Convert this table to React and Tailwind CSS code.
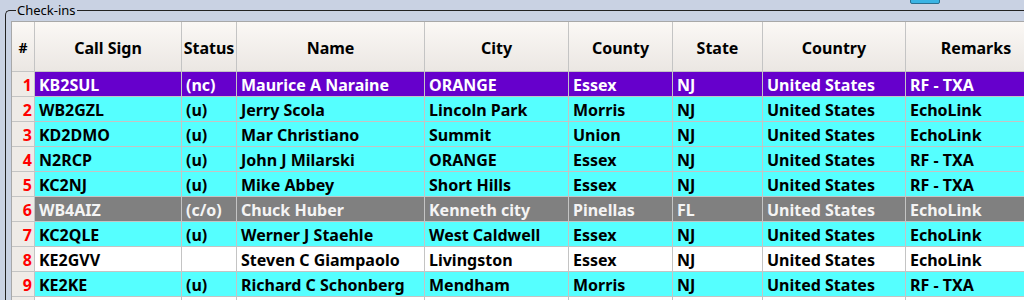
import React from 'react';

const rows = [
  { call: 'KB2SUL', status: '(nc)', name: 'Maurice A Naraine', city: 'ORANGE', county: 'Essex', state: 'NJ', country: 'United States', remarks: 'RF - TXA', tone: 'purple' },
  { call: 'WB2GZL', status: '(u)', name: 'Jerry Scola', city: 'Lincoln Park', county: 'Morris', state: 'NJ', country: 'United States', remarks: 'EchoLink', tone: 'cyan' },
  { call: 'KD2DMO', status: '(u)', name: 'Mar Christiano', city: 'Summit', county: 'Union', state: 'NJ', country: 'United States', remarks: 'EchoLink', tone: 'cyan' },
  { call: 'N2RCP', status: '(u)', name: 'John J Milarski', city: 'ORANGE', county: 'Essex', state: 'NJ', country: 'United States', remarks: 'RF - TXA', tone: 'cyan' },
  { call: 'KC2NJ', status: '(u)', name: 'Mike Abbey', city: 'Short Hills', county: 'Essex', state: 'NJ', country: 'United States', remarks: 'RF - TXA', tone: 'cyan' },
  { call: 'WB4AIZ', status: '(c/o)', name: 'Chuck Huber', city: 'Kenneth city', county: 'Pinellas', state: 'FL', country: 'United States', remarks: 'EchoLink', tone: 'gray' },
  { call: 'KC2QLE', status: '(u)', name: 'Werner J Staehle', city: 'West Caldwell', county: 'Essex', state: 'NJ', country: 'United States', remarks: 'EchoLink', tone: 'cyan' },
  { call: 'KE2GVV', status: '', name: 'Steven C Giampaolo', city: 'Livingston', county: 'Essex', state: 'NJ', country: 'United States', remarks: 'EchoLink', tone: 'white' },
  { call: 'KE2KE', status: '(u)', name: 'Richard C Schonberg', city: 'Mendham', county: 'Morris', state: 'NJ', country: 'United States', remarks: 'RF - TXA', tone: 'cyan' },
  { call: '', status: '', name: '', city: '', county: '', state: '', country: '', remarks: '', tone: 'white' },
];

const tones = {
  purple: 'bg-[#6600cc] text-white',
  cyan: 'bg-[#55ffff] text-black',
  gray: 'bg-[#808080] text-[#f4f4f4]',
  white: 'bg-white text-black',
};

const headers = ['Call Sign', 'Status', 'Name', 'City', 'County', 'State', 'Country', 'Remarks'];
const fields = ['call', 'status', 'name', 'city', 'county', 'state', 'country', 'remarks'];

const grid = 'grid grid-cols-[23px_147px_55px_188px_144px_104px_90px_143px_141px]';

export default function App() {
  return (
    <div className="relative h-[300px] overflow-hidden bg-[#c9d2e3] font-['Noto_Sans',sans-serif]">
      <div className="absolute left-[910px] top-[-4px] h-[8px] w-[30px] rounded-[2px] border border-[#2a6f90] bg-[#3ab4e4]" />

      <div className="relative ml-[5px] mt-[10px] rounded-tl-[5px] border-l border-t border-[#222] pl-[5px] pt-[10px]">
        <span className="absolute left-[10px] top-[-9px] bg-[#c9d2e3] px-[1px] text-[13px] leading-[16px] text-black">
          Check-ins
        </span>

        <div className="w-max border-l border-t border-[#a8a8a8]">
          <div className={`${grid} h-[50px]`}>
            <div className="flex items-center justify-center border-b border-r border-[#c4c4c4] bg-gradient-to-b from-[#fbf8f5] to-[#ebe7e3] pt-[2px] text-[14px] font-bold text-black">
              #
            </div>
            {headers.map((h) => (
              <div
                key={h}
                className="flex items-center justify-center border-b border-r border-[#c4c4c4] bg-gradient-to-b from-[#fbf8f5] to-[#ebe7e3] pt-[2px] text-[16px] font-bold text-black"
              >
                {h}
              </div>
            ))}
          </div>

          {rows.map((r, i) => (
            <div key={i} className={`${grid} h-[25px] text-[16px] font-bold leading-[24px]`}>
              <div className="overflow-hidden border-b border-r border-[#c4c4c4] bg-[#efebe7] pr-[2px] pt-[1px] text-right text-[#ff0000]">
                {r.call ? i + 1 : ''}
              </div>
              {fields.map((f) => (
                <div
                  key={f}
                  className={`overflow-hidden whitespace-nowrap border-b border-r border-[#c4c4c4] pl-[4px] pt-[1px] ${tones[r.tone]}`}
                >
                  {r[f]}
                </div>
              ))}
            </div>
          ))}
        </div>
      </div>
    </div>
  );
}
